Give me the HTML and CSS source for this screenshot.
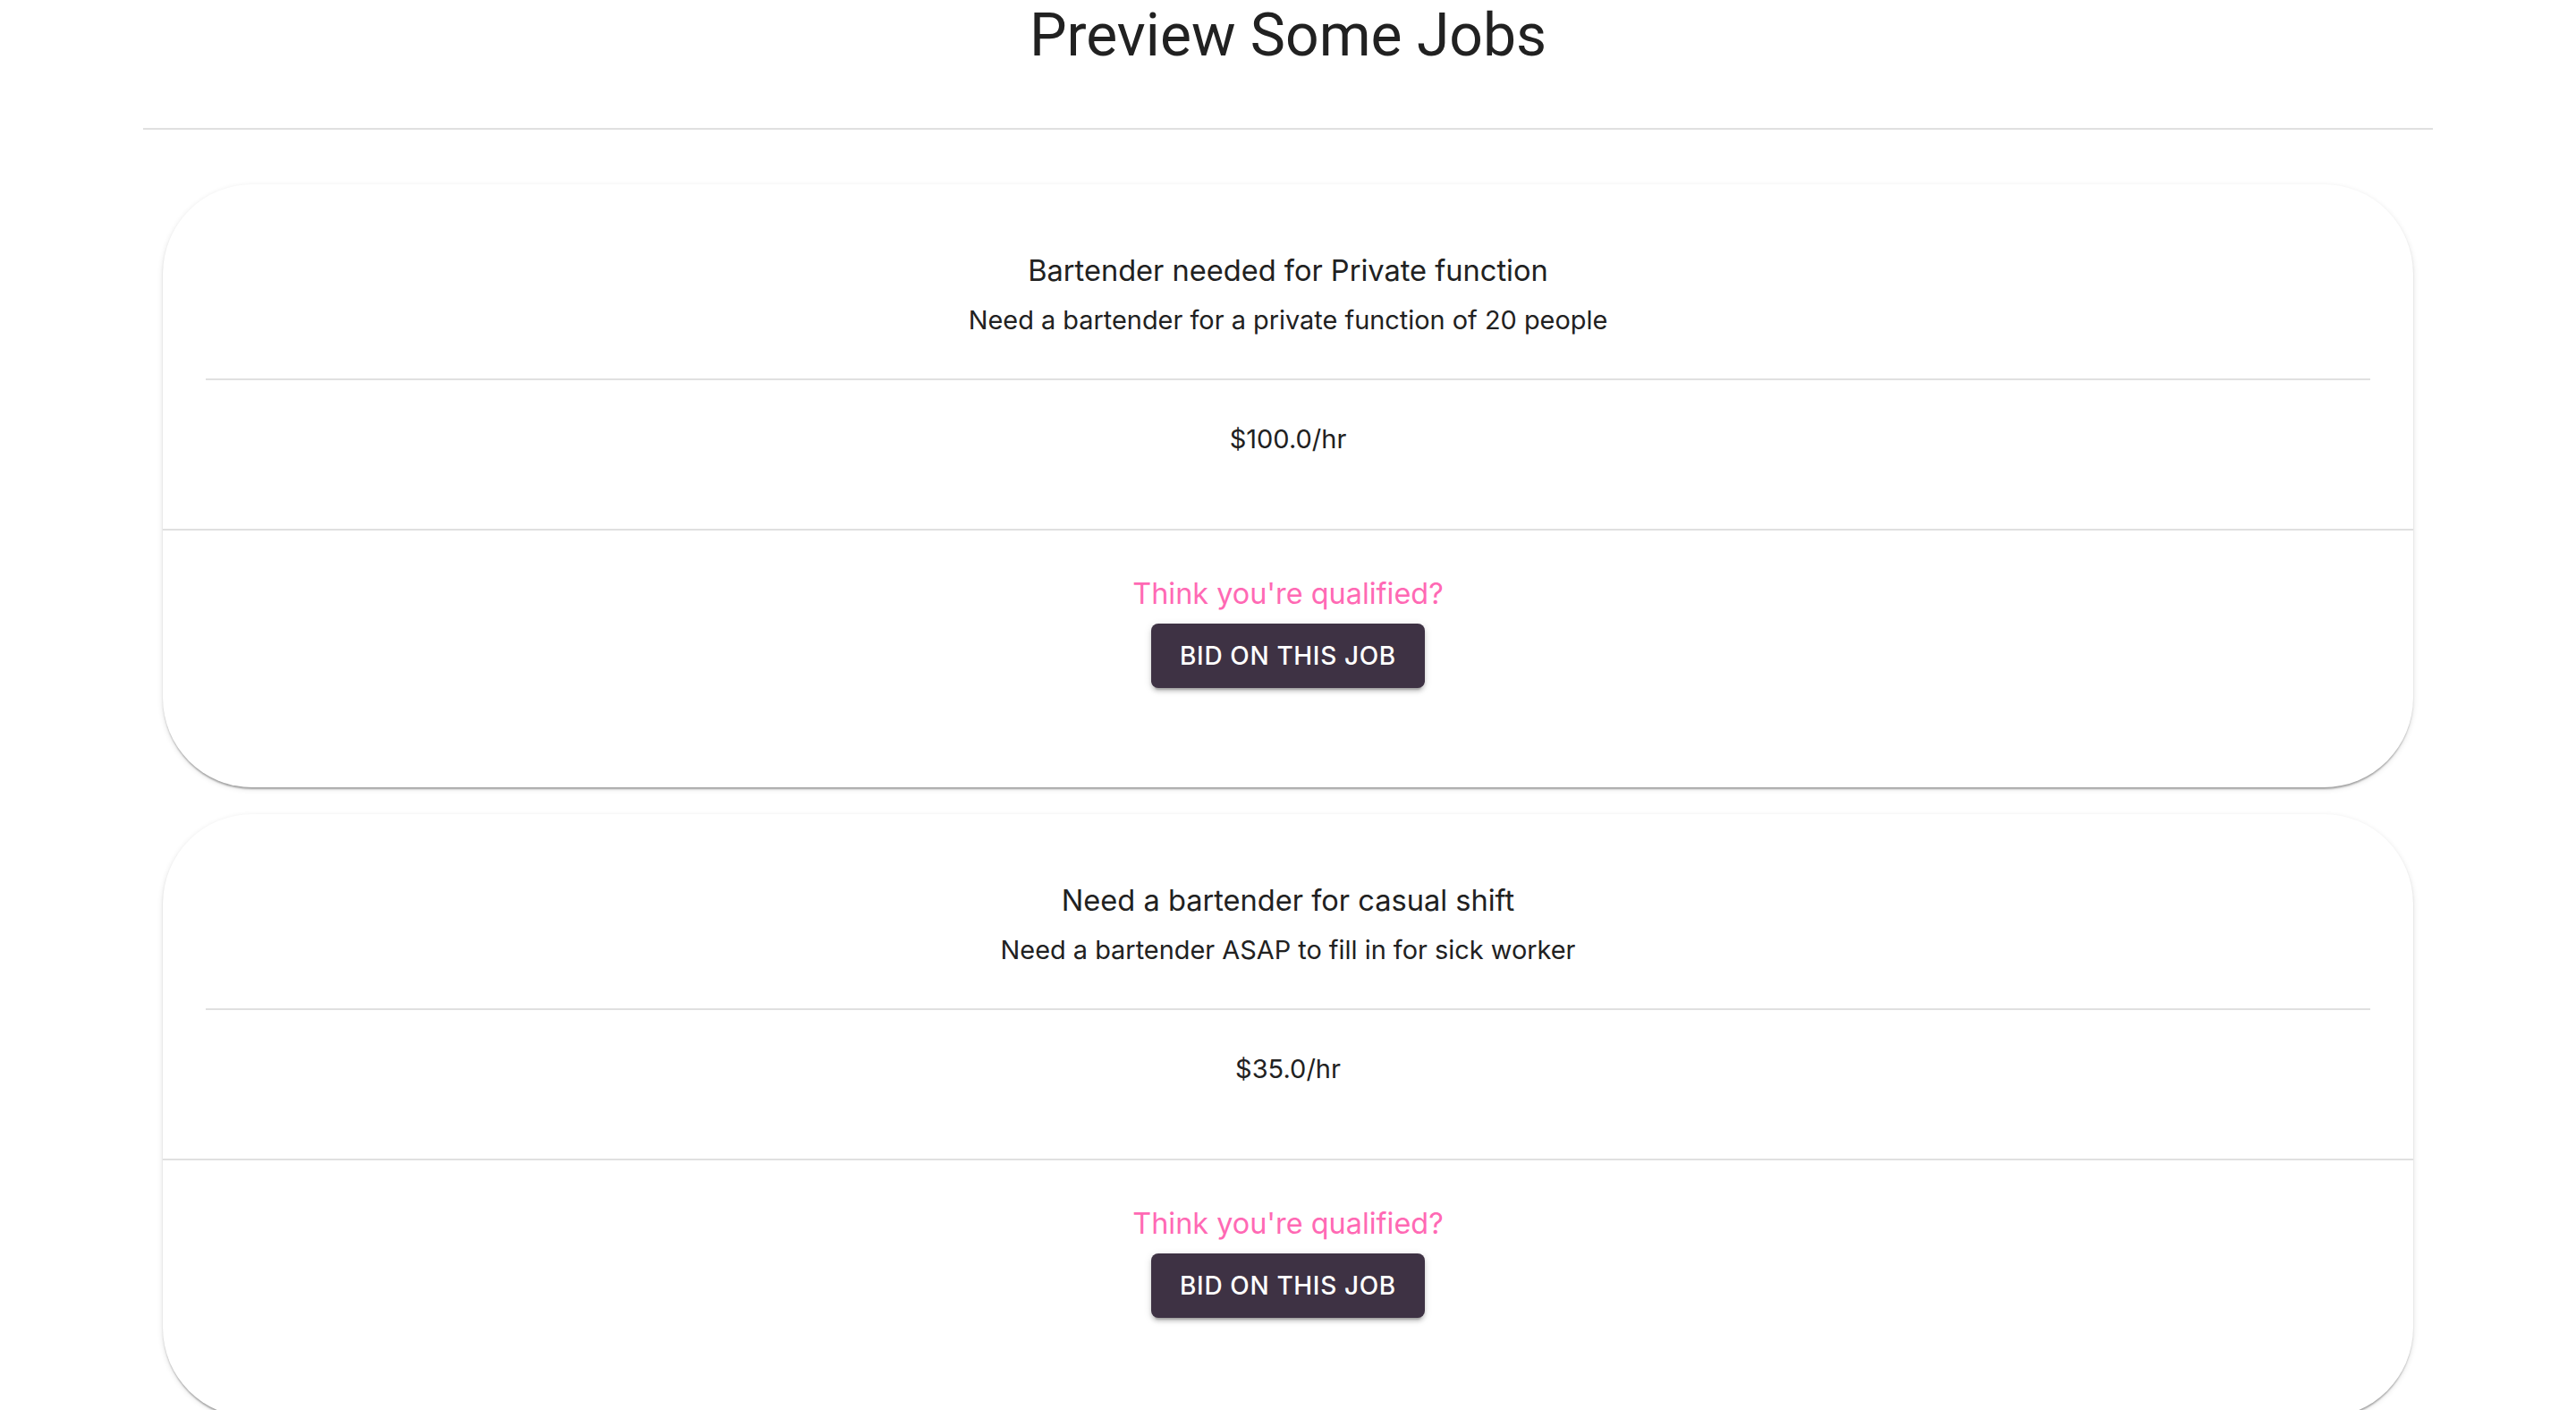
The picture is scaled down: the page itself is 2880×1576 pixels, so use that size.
FILE: index.html
```html
<!DOCTYPE html>
<html lang="en">
<head>
<meta charset="utf-8">
<title>Preview Some Jobs</title>
<link rel="stylesheet" href="styles.css">
</head>
<body>
<main class="page">
  <h1 class="page-title">Preview Some Jobs</h1>
  <hr class="page-rule">
  <section class="job-list">
    <article class="job-card">
      <div class="job-head">
        <h2 class="job-title">Bartender needed for Private function</h2>
        <p class="job-desc">Need a bartender for a private function of 20 people</p>
      </div>
      <hr class="job-rule">
      <div class="job-rate">$100.0/hr</div>
      <div class="job-cta">
        <p class="cta-text">Think you're qualified?</p>
        <button class="bid-btn" type="button">Bid on this job</button>
      </div>
    </article>
    <article class="job-card">
      <div class="job-head">
        <h2 class="job-title">Need a bartender for casual shift</h2>
        <p class="job-desc">Need a bartender ASAP to fill in for sick worker</p>
      </div>
      <hr class="job-rule">
      <div class="job-rate">$35.0/hr</div>
      <div class="job-cta">
        <p class="cta-text">Think you're qualified?</p>
        <button class="bid-btn" type="button">Bid on this job</button>
      </div>
    </article>
  </section>
</main>
</body>
</html>
```
FILE: styles.css
```css
html, body {
  margin: 0;
  padding: 0;
  background: #ffffff;
}

body {
  font-family: Inter, "Noto Sans", "Liberation Sans", sans-serif;
  color: #212121;
}

.page {
  width: 2560px;
  margin: 0 auto;
}

.page-title {
  margin: 0 0 63px;
  font-family: Roboto, "Liberation Sans", sans-serif;
  font-weight: 400;
  font-size: 66px;
  line-height: 80px;
  text-align: center;
  color: #212121;
}

.page-rule {
  margin: 0;
  border: none;
  height: 2px;
  background: #e0e0e0;
}

.job-list {
  display: flex;
  flex-direction: column;
  gap: 30px;
  padding: 61px 22px 40px;
}

.job-card {
  background: #ffffff;
  border-radius: 100px;
  box-shadow: 0 4px 2px -2px rgba(0, 0, 0, 0.2),
              0 2px 2px 0 rgba(0, 0, 0, 0.14),
              0 2px 6px 0 rgba(0, 0, 0, 0.12);
  text-align: center;
}

.job-head {
  padding: 72px 48px 45px;
}

.job-title {
  margin: 0 0 12px;
  font-size: 32.6px;
  font-weight: 400;
  line-height: 48px;
}

.job-desc {
  margin: 0;
  font-size: 28.9px;
  line-height: 40px;
}

.job-rule {
  margin: 0 48px;
  border: none;
  height: 2px;
  background: #e0e0e0;
}

.job-rate {
  padding: 46px 48px 80px;
  font-size: 29px;
  line-height: 40px;
}

.job-cta {
  border-top: 2px solid #e0e0e0;
  padding: 44px 48px 111px;
  display: flex;
  flex-direction: column;
  align-items: center;
}

.cta-text {
  margin: 0 0 6px;
  font-size: 32.4px;
  line-height: 54px;
  color: #ff69b4;
}

.bid-btn {
  height: 72px;
  padding: 0 32px;
  border: none;
  border-radius: 8px;
  background: #3e3244;
  color: #ffffff;
  font-family: Inter, "Noto Sans", sans-serif;
  font-size: 28px;
  font-weight: 500;
  letter-spacing: 0.65px;
  text-transform: uppercase;
  box-shadow: 0 6px 2px -4px rgba(0, 0, 0, 0.2),
              0 4px 4px 0 rgba(0, 0, 0, 0.14),
              0 2px 10px 0 rgba(0, 0, 0, 0.12);
  cursor: pointer;
}
```
